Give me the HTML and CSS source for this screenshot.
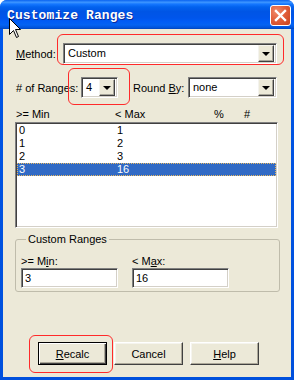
FILE: index.html
```html
<!DOCTYPE html>
<html>
<head>
<meta charset="utf-8">
<link rel="stylesheet" href="styles.css">
</head>
<body>
<div class="window">
  <div class="titlebar">
    <span class="title">Customize Ranges</span>
    <span class="close">
      <svg width="13" height="13" viewBox="0 0 13 13"><path d="M2 2 L11 11 M11 2 L2 11" stroke="#fff" stroke-width="2.4" stroke-linecap="square"/></svg>
    </span>
  </div>
  <div class="client">
    <div class="row row-method">
      <label class="lbl lbl-method"><u>M</u>ethod:</label>
      <div class="combo combo-method"><span class="val">Custom</span><span class="ddbtn"><i class="tri"></i></span></div>
    </div>
    <div class="row row-ranges">
      <label class="lbl lbl-ranges"># of Ranges:</label>
      <div class="combo combo-num"><span class="val">4</span><span class="ddbtn"><i class="tri"></i></span></div>
      <label class="lbl lbl-round">Round <u>B</u>y:</label>
      <div class="combo combo-round"><span class="val">none</span><span class="ddbtn"><i class="tri"></i></span></div>
    </div>
    <div class="list-head">
      <span class="c1">&gt;= Min</span><span class="c2">&lt; Max</span><span class="c3">%</span><span class="c4">#</span>
    </div>
    <div class="list">
      <div class="lrow"><span class="c1">0</span><span class="c2">1</span></div>
      <div class="lrow"><span class="c1">1</span><span class="c2">2</span></div>
      <div class="lrow"><span class="c1">2</span><span class="c2">3</span></div>
      <div class="lrow sel"><span class="c1">3</span><span class="c2">16</span></div>
    </div>
    <fieldset class="group">
      <legend>Custom Ranges</legend>
      <div class="fields">
        <div class="field">
          <label class="lbl">&gt;= M<u>i</u>n:</label>
          <div class="edit">3</div>
        </div>
        <div class="field">
          <label class="lbl">&lt; M<u>a</u>x:</label>
          <div class="edit">16</div>
        </div>
      </div>
    </fieldset>
    <div class="buttons">
      <button class="btn default"><u>R</u>ecalc</button>
      <button class="btn">Cancel</button>
      <button class="btn"><u>H</u>elp</button>
    </div>
  </div>
  <div class="annot a-method"></div>
  <div class="annot a-num"></div>
  <div class="annot a-recalc"></div>
  <svg class="cursor" width="13" height="21" viewBox="0 0 13 21"><path d="M0.5 0.5 L0.5 16.5 L4.5 12.5 L7.5 19.5 L9.5 18.5 L6.5 11.5 L11.5 11.5 Z" fill="#fff" stroke="#000" stroke-width="1"/></svg>
</div>
</body>
</html>
```

FILE: styles.css
```css
html, body {
  margin: 0;
  padding: 0;
  background: #ffffff;
}
body {
  width: 297px;
  height: 380px;
  overflow: hidden;
  font-family: "Liberation Sans", Arial, sans-serif;
  font-size: 11px;
  color: #000;
}
.window {
  position: relative;
  width: 294px;
  height: 380px;
  background: linear-gradient(to bottom, #0058ee 0%, #0054e3 30%, #0050dd 100%);
  border-radius: 7px 7px 0 0;
  display: flex;
  flex-direction: column;
}
.titlebar {
  height: 29px;
  flex: none;
  display: flex;
  align-items: center;
  padding: 0 0 0 7px;
  border-radius: 7px 7px 0 0;
  background: linear-gradient(to bottom, #0a63f0 0%, #3d95ff 8%, #1577ff 14%, #0262ee 24%, #0055e5 40%, #0055eb 62%, #005cf5 74%, #0463f2 86%, #0052d9 96%, #0044b8 100%);
}
.title {
  font-family: "Liberation Mono", monospace;
  font-weight: bold;
  font-size: 13px;
  color: #fff;
  text-shadow: 1px 1px 0 #0a2a9a;
  letter-spacing: 0.1px;
  margin-top: 1px;
}
.close {
  position: absolute;
  left: 270px;
  top: 5px;
  width: 19px;
  height: 19px;
  border: 1px solid #fff;
  border-radius: 3px;
  background: radial-gradient(circle at 30% 30%, #f08a6a 0%, #e2603c 45%, #c8421c 100%);
  display: flex;
  align-items: center;
  justify-content: center;
}
.close svg { display: block; }
.client {
  flex: 1;
  margin: 0 3px 3px 3px;
  background: #ece9d8;
  padding: 14px 14px 0 13px;
  display: flex;
  flex-direction: column;
}
.row {
  display: flex;
  align-items: center;
  height: 21px;
}
.row-ranges { margin-top: 13px; }
.lbl { white-space: nowrap; }
.lbl-method { width: 47px; flex: none; }
.lbl-ranges { width: 65px; flex: none; }
.lbl-round { width: 55px; margin-left: 15px; flex: none; }
.combo {
  box-sizing: border-box;
  height: 21px;
  background: #fff;
  border: 1px solid;
  border-color: #808080 #ffffff #ffffff #808080;
  box-shadow: inset 1px 1px 0 #404040, inset -1px -1px 0 #d4d0c8;
  display: flex;
  align-items: center;
  padding: 2px;
}
.combo-method { flex: 1; }
.combo-num { width: 37px; flex: none; }
.combo-round { flex: 1; }
.combo .val {
  flex: 1;
  padding-left: 2px;
  line-height: 15px;
  overflow: hidden;
}
.ddbtn {
  width: 16px;
  height: 17px;
  box-sizing: border-box;
  background: #ece9d8;
  border: 1px solid;
  border-color: #f4f3ee #404040 #404040 #f4f3ee;
  box-shadow: inset -1px -1px 0 #a8a59a;
  display: flex;
  align-items: center;
  justify-content: center;
  flex: none;
}
.tri {
  width: 0;
  height: 0;
  border-left: 4px solid transparent;
  border-right: 4px solid transparent;
  border-top: 4px solid #000;
  margin-top: 1px;
}
.list-head {
  position: relative;
  height: 16px;
  margin-top: 8px;
  margin-left: -1px;
  line-height: 16px;
}
.list-head span, .lrow span {
  position: absolute;
  top: 0;
}
.list-head .c1 { left: 1px; }
.list-head .c2 { left: 100px; }
.list-head .c3 { left: 199px; }
.list-head .c4 { left: 229px; }
.list {
  box-sizing: border-box;
  height: 106px;
  margin: 0 -1px 0 -1px;
  background: #fff;
  border: 1px solid;
  border-color: #808080 #ffffff #ffffff #808080;
  box-shadow: inset 1px 1px 0 #404040, inset -1px -1px 0 #d4d0c8;
  padding: 1px;
}
.lrow {
  position: relative;
  height: 13px;
  line-height: 13px;
}
.lrow .c1 { left: 2px; }
.lrow .c2 { left: 100px; }
.lrow.sel {
  background: #316ac5;
  color: #fff;
  outline: 1px dotted #e8b860;
  outline-offset: -1px;
}
.group {
  margin: 5px -3px 0 -1px;
  padding: 9px 4px 3px 5px;
  border: 1px solid #bfbcab;
  border-radius: 3px;
  min-width: 0;
}
.group legend {
  padding: 0 2px;
  margin-left: 5px;
  line-height: 13px;
}
.fields {
  display: flex;
  gap: 14px;
}
.field {
  display: flex;
  flex-direction: column;
}
.field .lbl { line-height: 13px; }
.edit {
  box-sizing: border-box;
  width: 97px;
  height: 20px;
  background: #fff;
  border: 1px solid;
  border-color: #808080 #ffffff #ffffff #808080;
  box-shadow: inset 1px 1px 0 #404040, inset -1px -1px 0 #d4d0c8;
  padding: 2px 3px;
  line-height: 15px;
}
.buttons {
  display: flex;
  gap: 7px;
  margin-top: 50px;
  padding-left: 22px;
}
.btn {
  box-sizing: border-box;
  width: 69px;
  height: 23px;
  font-family: "Liberation Sans", Arial, sans-serif;
  font-size: 11px;
  color: #000;
  background: #ece9d8;
  border: 1px solid;
  border-color: #ffffff #404040 #404040 #ffffff;
  box-shadow: inset -1px -1px 0 #aca899, inset 1px 1px 0 #f5f4ee;
  padding: 0;
}
.btn.default {
  border: 1px solid #000;
  box-shadow: inset 1px 1px 0 #ffffff, inset -1px -1px 0 #404040, inset -2px -2px 0 #aca899;
}
.annot {
  position: absolute;
  border: 1px solid #ff2a2a;
  border-radius: 6px;
  box-sizing: border-box;
}
.a-method { left: 57px; top: 34px; width: 227px; height: 31px; }
.a-num { left: 68px; top: 68px; width: 62px; height: 37px; }
.a-recalc { left: 29px; top: 335px; width: 84px; height: 38px; }
.cursor {
  position: absolute;
  left: 9px;
  top: 18px;
}
```
